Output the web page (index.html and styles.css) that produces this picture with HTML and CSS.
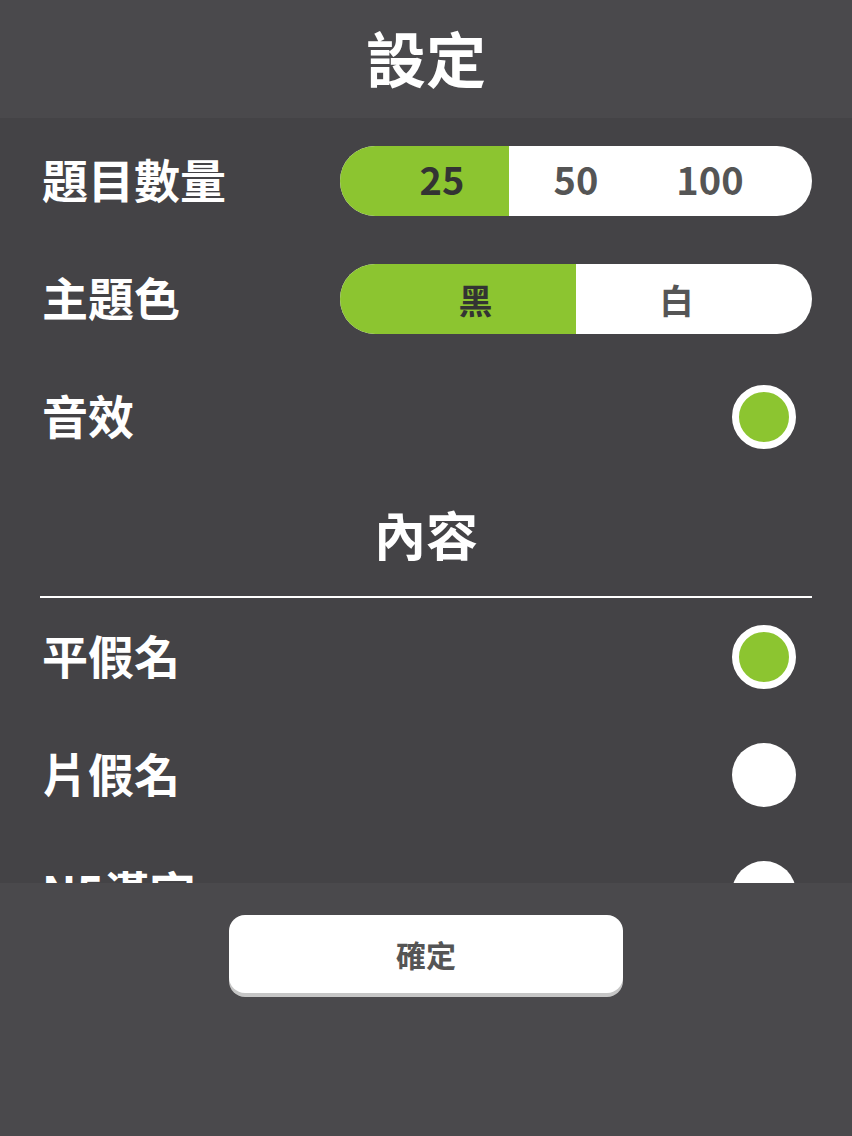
FILE: index.html
```html
<!DOCTYPE html>
<html lang="zh-Hant">
<head>
<meta charset="utf-8">
<title>設定</title>
<link rel="stylesheet" href="styles.css">
</head>
<body>
<div class="app">
  <header class="header"><h1 class="title">設定</h1></header>
  <main class="content">
    <div class="row">
      <span class="label">題目數量</span>
      <div class="seg">
        <span class="seg-item seg-first seg-3 selected">25</span>
        <span class="seg-item seg-mid">50</span>
        <span class="seg-item seg-last seg-3">100</span>
      </div>
    </div>
    <div class="row">
      <span class="label">主題色</span>
      <div class="seg">
        <span class="seg-item seg-first seg-2 selected">黑</span>
        <span class="seg-item seg-last seg-2">白</span>
      </div>
    </div>
    <div class="row">
      <span class="label">音效</span>
      <span class="toggle on"></span>
    </div>
    <h2 class="section">內容</h2>
    <div class="row">
      <span class="label">平假名</span>
      <span class="toggle on"></span>
    </div>
    <div class="row">
      <span class="label">片假名</span>
      <span class="toggle"></span>
    </div>
    <div class="row">
      <span class="label">N5漢字</span>
      <span class="toggle"></span>
    </div>
  </main>
  <footer class="footer"><button class="confirm">確定</button></footer>
</div>
</body>
</html>
```
FILE: styles.css
```css
* { box-sizing: border-box; }
html, body { margin: 0; padding: 0; }
body {
  background: #444346;
  font-family: "Noto Sans CJK TC", "Noto Sans", sans-serif;
  color: #fff;
}
.app {
  width: 852px;
  height: 1136px;
  display: flex;
  flex-direction: column;
}
.header {
  height: 118px;
  flex: 0 0 118px;
  background: #4a494c;
  display: flex;
  align-items: center;
  justify-content: center;
}
.title {
  margin: 0;
  font-size: 60px;
  font-weight: 700;
  line-height: 1;
  color: #fff;
  padding-bottom: 4px;
}
.content {
  flex: 0 0 765px;
  height: 765px;
  overflow: hidden;
  background: #444346;
  padding: 4px 40px 0;
}
.row {
  height: 118px;
  display: flex;
  align-items: center;
  justify-content: space-between;
}
.label {
  font-size: 46px;
  font-weight: 700;
  line-height: 1;
  color: #fff;
  padding-left: 2px;
  padding-bottom: 6px;
}
.seg {
  width: 472px;
  height: 70px;
  border-radius: 35px;
  background: #fff;
  overflow: hidden;
  display: flex;
}
.seg-item {
  display: flex;
  align-items: center;
  justify-content: center;
  font-size: 38px;
  font-weight: 700;
  color: #555;
  font-family: "Noto Sans CJK TC", sans-serif;
}
.seg-3, .seg-mid { padding-bottom: 5px; }
.seg-2 { font-size: 34px; }
.seg-mid { width: 134px; }
.seg-first.seg-3, .seg-last.seg-3 { width: 169px; }
.seg-first.seg-2, .seg-last.seg-2 { width: 236px; }
.seg-first { padding-left: 35px; }
.seg-last { padding-right: 35px; }
.seg-item.selected { background: #8cc530; color: #333; }
.toggle {
  width: 64px;
  height: 64px;
  border-radius: 50%;
  background: #fff;
  margin-right: 16px;
}
.toggle.on {
  background: #8cc530;
  border: 7px solid #fff;
}
.section {
  margin: 0;
  padding: 26px 0 30px;
  line-height: 64px;
  font-size: 52px;
  font-weight: 700;
  text-align: center;
  color: #fff;
  border-bottom: 2px solid #fff;
}
.footer {
  flex: 1;
  background: #4a494c;
  display: flex;
  justify-content: center;
  align-items: flex-start;
  padding-top: 32px;
}
.confirm {
  width: 394px;
  height: 78px;
  border: none;
  border-radius: 16px;
  background: #fff;
  box-shadow: 0 4px 0 #c6c6c6;
  font-family: "Noto Sans CJK TC", sans-serif;
  font-size: 30px;
  font-weight: 700;
  color: #555;
  padding: 0;
}
```
